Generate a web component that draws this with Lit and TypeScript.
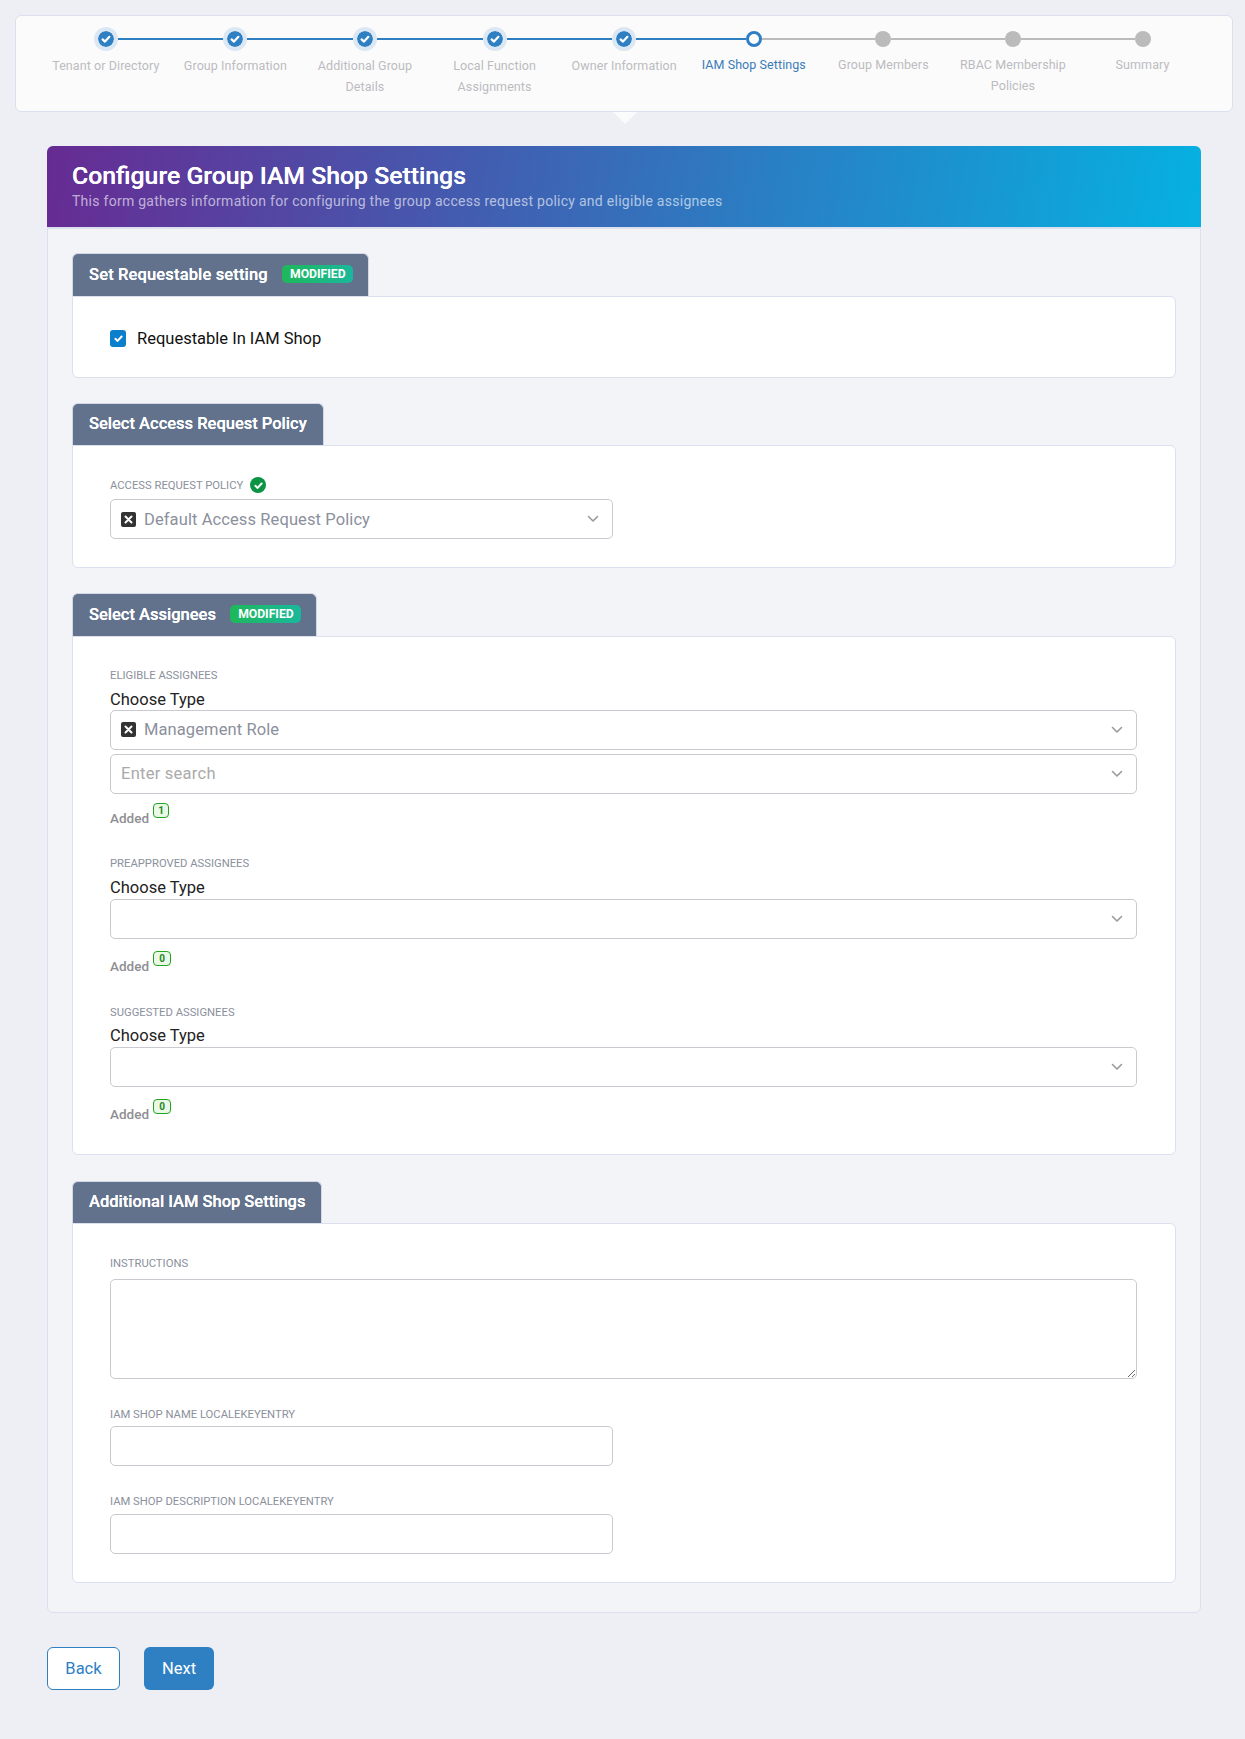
import { LitElement, html, css, svg } from "lit";
import { customElement } from "lit/decorators.js";

const steps = [
  ["Tenant or Directory", "done"],
  ["Group Information", "done"],
  ["Additional Group Details", "done"],
  ["Local Function Assignments", "done"],
  ["Owner Information", "done"],
  ["IAM Shop Settings", "current"],
  ["Group Members", "todo"],
  ["RBAC Membership Policies", "todo"],
  ["Summary", "todo"],
];

const tick = (w: number) => html`<svg class="tick" width=${w} height=${w} viewBox="0 0 12 12" fill="none" stroke="#fff" stroke-width="2.2" stroke-linecap="round" stroke-linejoin="round"><path d="M2.6 6.4 5 8.6 9.4 3.8"/></svg>`;
const chevron = svg`<path d="M1.5 1.5 6 6l4.5-4.5" fill="none" stroke="#9a9a9e" stroke-width="1.6" stroke-linecap="round" stroke-linejoin="round"/>`;

@customElement("app-root")
export class AppRoot extends LitElement {
  static styles = css`
    :host { display: block; background: #eeeff4; font-family: Roboto, "Liberation Sans", sans-serif; padding: 15px 44px 49px 47px; height: 1739px; box-sizing: border-box; color: #222; }
    * { box-sizing: border-box; }

    .stepper { position: relative; margin: 0 -32px 34px -32px; height: 97px; background: #fbfbfc; border: 1px solid #dcdfee; border-radius: 6px; padding: 11px 24px 0 25px; display: grid; grid-template-columns: repeat(9, 129.6px); }
    .stepper::after { content: ""; position: absolute; left: 597px; top: 96px; border-left: 12px solid transparent; border-right: 12px solid transparent; border-top: 12px solid #fbfbfc; }
    .step { display: flex; flex-direction: column; align-items: center; text-align: center; }
    .head { display: flex; align-items: center; width: 100%; height: 24px; }
    .seg { flex: 1; height: 2.5px; background: #2f7fc3; }
    .seg.off { background: #bbb; }
    .seg.none { background: transparent; }
    .node { flex: none; display: flex; align-items: center; justify-content: center; border-radius: 50%; }
    .node.done { width: 24px; height: 24px; background: #2f7fc3; border: 4px solid #dbe8f4; background-clip: padding-box; }
    .node.current { width: 16px; height: 16px; background: #fff; border: 3px solid #2f7fc3; }
    .node.todo { width: 16px; height: 16px; background: #bbb; }
    .label { font-size: 12.5px; line-height: 21px; color: #bcbcbf; margin-top: 4px; padding: 0 16px; letter-spacing: 0.08px; }
    .label.current { color: #3a7cb8; margin-top: 3px; padding: 0 8px; }
    .label.todo { margin-top: 3px; }
    .label.wide { padding: 0 6px; }

    .panel { border: 1px solid #dcdfee; border-radius: 6px; background: #f3f4f7; }
    .banner { height: 83px; margin: -1px -1px 0; border-radius: 6px 6px 0 0; border-bottom: 2px solid #dcdfee; background-image: linear-gradient(100deg, #672b93 0%, #05b1e1 100%); background-clip: padding-box; padding: 15px 0 0 25px; color: #fff; }
    .banner h1 { margin: 0; font-size: 24.8px; line-height: 30px; font-weight: 500; text-shadow: 0 0 0.6px #fff; }
    .banner p { margin: 0; font-size: 14px; line-height: 20px; color: rgba(255, 255, 255, 0.62); letter-spacing: 0.27px; }

    .body { padding: 24px 24px 29px 24px; display: flex; flex-direction: column; gap: 25px; }
    .section { display: flex; flex-direction: column; align-items: flex-start; }
    .section.s4 { margin-top: 1px; }
    .tab { display: flex; align-items: center; height: 42px; padding: 0 16px 2px 16px; gap: 14.5px; background: #62718c; border: 1px solid #d3d7e6; border-bottom: 0; border-radius: 6px 6px 0 0; color: #fff; font-size: 16.5px; font-weight: 500; text-shadow: 0 0 0.6px #fff; }
    .tab.tall { height: 43px; padding-right: 15px; }
    .tab.t1 { letter-spacing: 0.15px; }
    .badge { display: inline-flex; align-items: center; justify-content: center; width: 71px; height: 18px; border-radius: 5px; font-size: 12.2px; letter-spacing: 0; font-weight: 700; text-shadow: none; background: linear-gradient(90deg, #1eb85a, #1ab89c); }
    .card { width: 100%; background: #fff; border: 1px solid #dcdfee; border-radius: 0 6px 6px 6px; padding: 30px 38px 30px 37px; }

    .check-row { display: flex; align-items: center; gap: 11px; font-size: 16.5px; line-height: 24px; color: #111; height: 20px; }
    .check-text { padding-top: 2px; }
    .check { width: 16px; height: 17px; background: #0b7fcc; border-radius: 3px; display: flex; align-items: center; justify-content: center; }
    .card.c1 { height: 82px; padding-top: 31px; }
    .card.c2 { padding-top: 31px; padding-bottom: 28px; }
    .card.c3 { padding-top: 30.5px; }
    .card.c4 { padding-top: 31px; padding-bottom: 28px; }

    .field-label { display: flex; align-items: center; gap: 7px; height: 16px; font-size: 11.25px; color: #8b909c; }
    .ok { width: 16px; height: 16px; border-radius: 50%; background: #0b9444; display: flex; align-items: center; justify-content: center; }
    .choose { height: 20px; margin-top: 6px; font-size: 16.5px; line-height: 20px; color: #222; }
    .spaced { height: 21px; margin-top: 6px; }
    .select { display: flex; align-items: center; height: 40px; border: 1px solid #c9c9cf; border-radius: 5px; padding: 0 11px 0 10px; font-size: 16.5px; letter-spacing: 0.1px; color: #8b909c; background: #fff; }
    .half { width: 503px; }
    .gap6 { margin-top: 6px; }
    .gap4 { margin-top: 4px; }
    .x { flex: none; width: 15px; height: 15px; border-radius: 2px; background: #333; margin-right: 8px; display: flex; align-items: center; justify-content: center; }
    .value { flex: 1; }
    .placeholder { color: #aaa; letter-spacing: 0.25px; }
    .chev { flex: none; margin-right: 2px; }
    .group { display: flex; flex-direction: column; margin-bottom: 28.5px; }
    .group.first { margin-bottom: 28px; }
    .group:last-child { margin-bottom: 0; }
    .added { display: flex; align-items: flex-start; gap: 4px; height: 20px; margin-top: 17px; font-size: 13.5px; line-height: 20px; font-weight: 500; color: #8f8f93; }
    .added.near { margin-top: 14px; }
    .count { min-width: 16px; height: 15px; margin-top: -5px; padding: 0 3px; border: 1px solid #22a51e; border-radius: 4px; background: #eaf8e8; color: #1d8a1a; font-size: 10px; line-height: 13px; font-weight: 700; text-align: center; }
    .count.zero { min-width: 18px; }

    textarea, input { display: block; width: 100%; border: 1px solid #c9c9cf; border-radius: 5px; background: #fff; margin: 0; padding: 8px 10px; font: inherit; outline: none; }
    textarea { height: 100px; margin-top: 8px; resize: vertical; }
    input { height: 40px; width: 503px; margin-top: 5px; }
    input.tight { margin-top: 4px; }
    .next-label { margin-top: 27px; }

    .actions { display: flex; gap: 24px; margin-top: 34px; }
    .btn { display: flex; align-items: center; justify-content: center; height: 43px; border-radius: 6px; font-size: 16.5px; font-weight: 400; }
    .back { width: 73px; background: #fff; border: 1px solid #2f7fc3; color: #2f7fc3; }
    .next { width: 70px; background: #2f7fc3; color: #fff; }
  `;

  private step(s: string[], i: number) {
    const [name, state] = s;
    const wide = name.length > 16 && !name.includes(" Group") && !name.includes("Local");
    return html`<div class="step">
      <div class="head">
        <span class="seg ${i === 0 ? "none" : state === "todo" ? "off" : ""}"></span>
        <span class="node ${state}">${state === "done" ? tick(12) : ""}</span>
        <span class="seg ${i === 8 ? "none" : state === "done" ? "" : "off"}"></span>
      </div>
      <div class="label ${state} ${wide ? "wide" : ""}">${name}</div>
    </div>`;
  }

  private sel(value: string, opts: { half?: boolean; x?: boolean; ph?: boolean } = {}) {
    return html`<div class="select ${opts.half ? "half" : ""}">
      ${opts.x ? html`<span class="x"><svg width="9" height="9" viewBox="0 0 9 9" stroke="#fff" stroke-width="2" stroke-linecap="round"><path d="M1.5 1.5l6 6M7.5 1.5l-6 6"/></svg></span>` : ""}
      <span class="value ${opts.ph ? "placeholder" : ""}">${value}</span>
      <svg class="chev" width="12" height="8" viewBox="0 0 12 8">${chevron}</svg>
    </div>`;
  }

  private assignee(title: string, count: number, inner: unknown, first = false) {
    return html`<div class="group ${first ? "first" : ""}">
      <div class="field-label">${title}</div>
      <div class="choose ${first ? "" : "spaced"}">Choose Type</div>
      ${inner}
      <div class="added ${first ? "near" : ""}">Added <span class="count ${count === 0 ? "zero" : ""}">${count}</span></div>
    </div>`;
  }

  render() {
    return html`
      <div class="stepper">${steps.map((s, i) => this.step(s, i))}</div>
      <div class="panel">
        <div class="banner">
          <h1>Configure Group IAM Shop Settings</h1>
          <p>This form gathers information for configuring the group access request policy and eligible assignees</p>
        </div>
        <div class="body">
          <div class="section">
            <div class="tab tall t1">Set Requestable setting <span class="badge">MODIFIED</span></div>
            <div class="card c1">
              <div class="check-row"><span class="check">${tick(11)}</span><span class="check-text">Requestable In IAM Shop</span></div>
            </div>
          </div>
          <div class="section">
            <div class="tab">Select Access Request Policy</div>
            <div class="card c2">
              <div class="field-label">ACCESS REQUEST POLICY <span class="ok">${tick(11)}</span></div>
              <div class="gap6">${this.sel("Default Access Request Policy", { half: true, x: true })}</div>
            </div>
          </div>
          <div class="section">
            <div class="tab tall">Select Assignees <span class="badge">MODIFIED</span></div>
            <div class="card c3">
              ${this.assignee("ELIGIBLE ASSIGNEES", 1, html`${this.sel("Management Role", { x: true })}<div class="gap4">${this.sel("Enter search", { ph: true })}</div>`, true)}
              ${this.assignee("PREAPPROVED ASSIGNEES", 0, this.sel(""))}
              ${this.assignee("SUGGESTED ASSIGNEES", 0, this.sel(""))}
            </div>
          </div>
          <div class="section s4">
            <div class="tab">Additional IAM Shop Settings</div>
            <div class="card c4">
              <div class="field-label">INSTRUCTIONS</div>
              <textarea></textarea>
              <div class="field-label next-label">IAM SHOP NAME LOCALEKEYENTRY</div>
              <input class="tight" />
              <div class="field-label next-label">IAM SHOP DESCRIPTION LOCALEKEYENTRY</div>
              <input />
            </div>
          </div>
        </div>
      </div>
      <div class="actions">
        <div class="btn back">Back</div>
        <div class="btn next">Next</div>
      </div>
    `;
  }
}
